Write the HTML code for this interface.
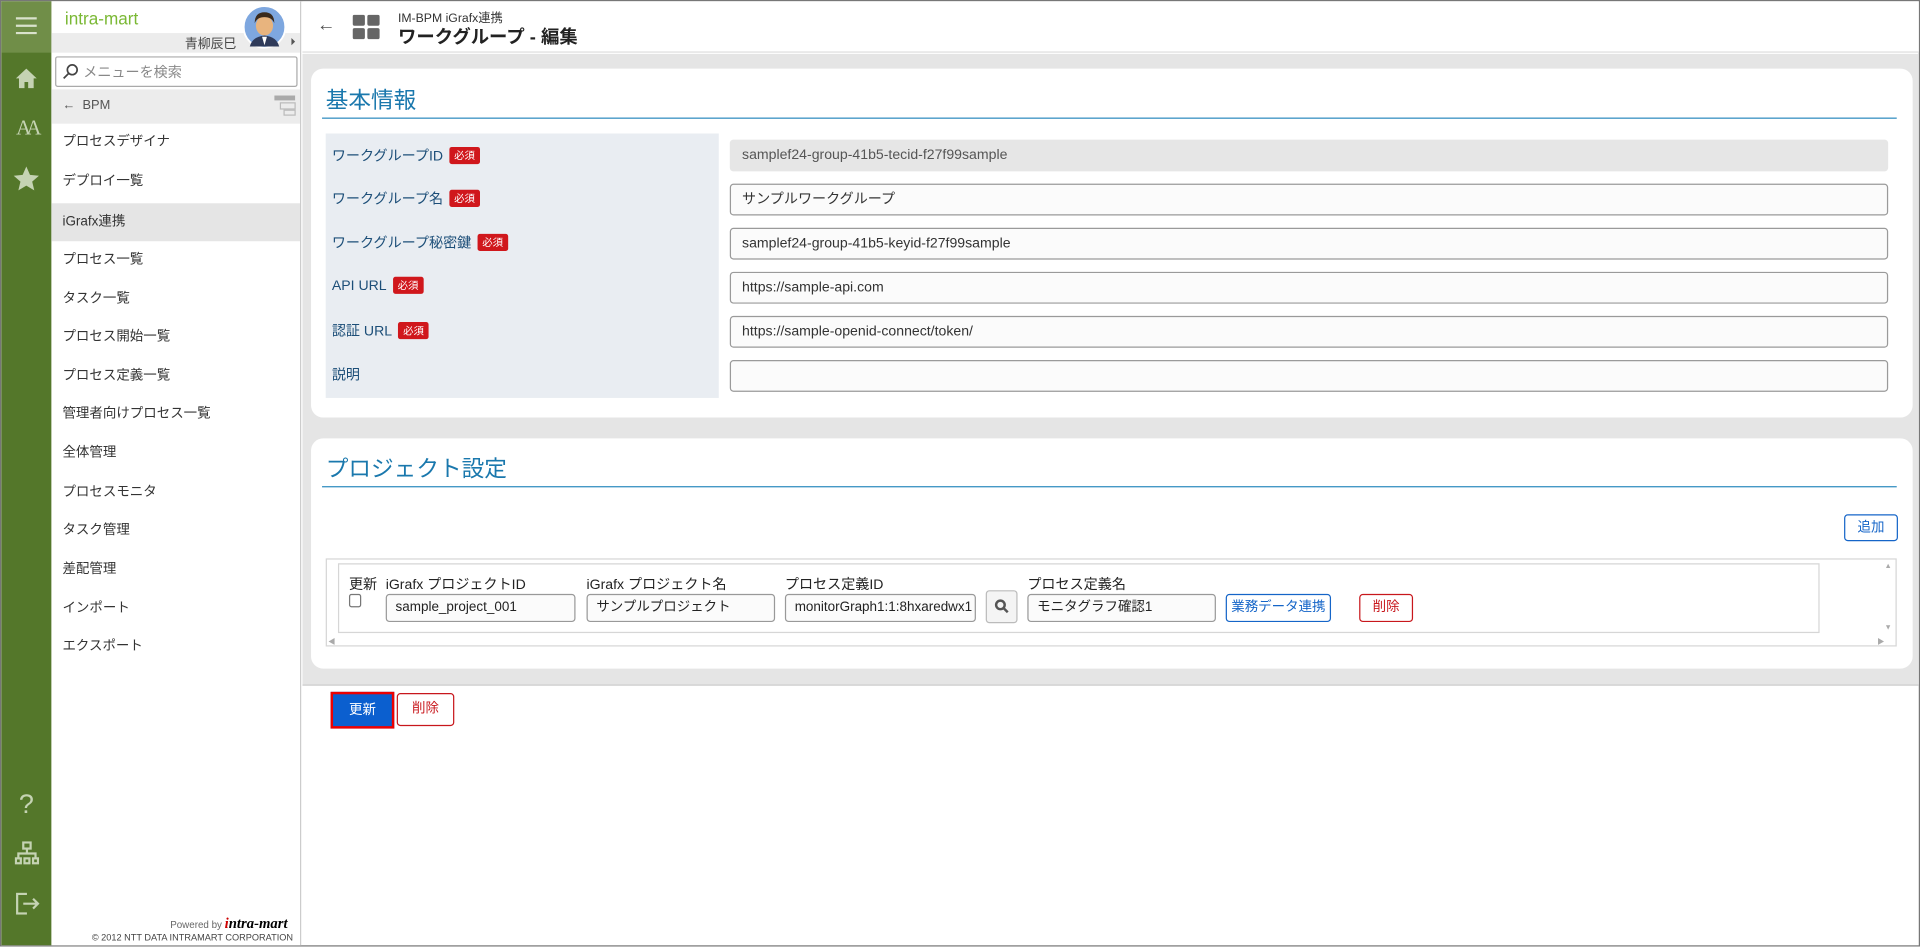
<!DOCTYPE html>
<html><head><meta charset="utf-8">
<style>
*{box-sizing:border-box;margin:0;padding:0}
html,body{width:1920px;height:946px;overflow:hidden;background:#fff}
body{font-family:"Liberation Sans","Noto Sans CJK JP",sans-serif;}
#w{position:absolute;left:0;top:0;width:1568px;height:773px;transform:scale(1.22449);transform-origin:0 0;border:1px solid #777;overflow:hidden}
.a{position:absolute}
.gb{left:0;top:0;width:41px;height:773px;background:#54772a}
.gt{left:0;top:0;width:41px;height:42px;background:#708e48}
.ic{color:#c5d3b3;position:absolute;left:0;width:41px;text-align:center}
.sb{left:41px;top:0;width:204px;height:773px;background:#fff;border-right:1px solid #ccc}
.mi{position:absolute;left:0;width:203px;height:31.6px;line-height:31.6px;padding-left:9px;font-size:11px;color:#333}
.card{position:absolute;background:#fff;border-radius:10px}
.ttl{position:absolute;font-size:18.5px;color:#1a78ad}
.ul{position:absolute;height:1px;background:#2d8bbf}
.lb{position:absolute;left:270px;font-size:11.5px;color:#1c4e78}
.rq{display:inline-block;background:#d0171c;color:#fff;font-size:8.5px;padding:1px 4px;border-radius:2px;margin-left:5px;vertical-align:1px}
.in{position:absolute;left:595px;width:946px;height:26px;border:1px solid #9a9a9a;border-radius:3px;background:#fbfbfb;font-size:11.5px;color:#333;padding-left:9px;line-height:24px}
.ti{position:absolute;top:484px;height:23px;border:1px solid #999;border-radius:3px;background:#fbfbfb;font-size:11px;color:#222;padding-left:7px;line-height:21px;white-space:nowrap;overflow:hidden}
.th{position:absolute;top:468px;font-size:11.5px;color:#222}
.btn{position:absolute;border-radius:3px;font-size:11px;text-align:center;background:#fff}
</style></head><body><div id="w">
<div class="a gb"></div><div class="a gt"></div>
<svg class="a" style="left:11px;top:12px" width="19" height="16"><path d="M1 2h17M1 8h17M1 14h17" stroke="#d9e2cc" stroke-width="1.8"/></svg>
<svg class="a" style="left:11px;top:54px" width="19" height="18"><path d="M9.5 1L1 9h2.5v8h4.5v-5h3v5h4.5v-8H18z" fill="#c5d3b3"/></svg>
<div class="ic" style="top:94px;font-family:'Liberation Serif',serif;font-size:17px;letter-spacing:-4px">AA</div>
<svg class="a" style="left:10px;top:135px" width="21" height="20"><path d="M10.5 0l3 6.8 7.3.7-5.5 4.8 1.7 7.2-6.5-3.9-6.5 3.9 1.7-7.2L.2 7.5l7.3-.7z" fill="#c5d3b3"/></svg>
<div class="ic" style="top:643px;font-size:22px">?</div>
<svg class="a" style="left:11px;top:686px" width="20" height="20" fill="none" stroke="#c5d3b3" stroke-width="1.8"><rect x="7" y="1" width="6" height="5"/><path d="M10 6v4M3 14v-4h14v4"/><rect x="1" y="14" width="4" height="4"/><rect x="8" y="14" width="4" height="4"/><rect x="15" y="14" width="4" height="4"/></svg>
<svg class="a" style="left:12px;top:728px" width="20" height="18" fill="none" stroke="#c5d3b3" stroke-width="1.8"><path d="M9 1H1v16h8M6 9h12M14 5l4 4-4 4"/></svg>

<div class="a sb">
 <div class="a" style="left:11px;top:6px;font-size:14px;color:#7ab834">intra-mart</div>
 <div class="a" style="left:0;top:26px;width:203px;height:16px;background:#ececec"></div>
 <div class="a" style="left:109px;top:27px;font-size:10.5px;color:#444">青柳辰巳</div>
 <div class="a" style="left:196px;top:30px;width:0;height:0;border-left:3px solid #555;border-top:3px solid transparent;border-bottom:3px solid transparent"></div>
 <svg class="a" style="left:156px;top:3px" width="36" height="36"><circle cx="18" cy="18" r="17" fill="#7ea7df" stroke="#fff" stroke-width="1.5"/><path d="M6 34q2-8 12-9 10 1 12 9z" fill="#2f3b5a"/><path d="M16 26l2 7 2-7z" fill="#fff"/><ellipse cx="18" cy="17" rx="7" ry="8" fill="#e8b47e"/><path d="M10 15q0-9 8-9 8 0 8 9-2-5-8-5-6 0-8 5z" fill="#3a2a1c"/></svg>
 <div class="a" style="left:3px;top:45px;width:198px;height:25px;border:1px solid #aaa;border-radius:2px"></div>
 <svg class="a" style="left:9px;top:51px" width="13" height="13" fill="none" stroke="#444" stroke-width="1.4"><circle cx="8" cy="5" r="4"/><path d="M5 8l-4 4"/></svg>
 <div class="a" style="left:26px;top:50px;font-size:11.5px;color:#888">メニューを検索</div>
 <div class="a" style="left:0;top:72px;width:203px;height:28px;background:#ececec"></div>
 <div class="a" style="left:9px;top:79px;font-size:10.5px;color:#555">←&nbsp; BPM</div>
 <svg class="a" style="left:182px;top:77px" width="18" height="18"><rect x="0" y="0" width="17" height="4" fill="#aaa"/><rect x="5" y="6" width="12" height="5" fill="none" stroke="#bbb"/><rect x="8" y="12" width="9" height="4" fill="none" stroke="#bbb"/></svg>
 <div class="mi" style="top:100px">プロセスデザイナ</div>
 <div class="mi" style="top:132px">デプロイ一覧</div>
 <div class="mi" style="top:164.5px;background:#e5e5e5">iGrafx連携</div>
 <div class="mi" style="top:196px">プロセス一覧</div>
 <div class="mi" style="top:227.5px">タスク一覧</div>
 <div class="mi" style="top:259px">プロセス開始一覧</div>
 <div class="mi" style="top:290.5px">プロセス定義一覧</div>
 <div class="mi" style="top:322px">管理者向けプロセス一覧</div>
 <div class="mi" style="top:354px">全体管理</div>
 <div class="mi" style="top:385.5px">プロセスモニタ</div>
 <div class="mi" style="top:417px">タスク管理</div>
 <div class="mi" style="top:449px">差配管理</div>
 <div class="mi" style="top:480.5px">インポート</div>
 <div class="mi" style="top:512px">エクスポート</div>
 <div class="a" style="left:97px;top:746px;font-size:8px;color:#666">Powered by <span style="font-family:'Liberation Serif',serif;font-size:12px;font-weight:bold;font-style:italic;color:#000"><span style="color:#c00">i</span>ntra-mart</span></div>
 <div class="a" style="left:33px;top:760px;font-size:7.5px;color:#444">© 2012 NTT DATA INTRAMART CORPORATION</div>
</div>

<div class="a" style="left:246px;top:0;width:1322px;height:42px;background:#fff;border-bottom:1px solid #ddd"></div>
<div class="a" style="left:258px;top:11px;font-size:15px;color:#555">←</div>
<svg class="a" style="left:287px;top:11px" width="24" height="22" fill="#666"><rect x="0" y="0" width="10" height="9" rx="1.5"/><rect x="12" y="0" width="10" height="9" rx="1.5"/><rect x="0" y="11" width="10" height="9" rx="1.5"/><rect x="12" y="11" width="10" height="9" rx="1.5"/></svg>
<div class="a" style="left:324px;top:5px;font-size:10px;color:#333">IM-BPM iGrafx連携</div>
<div class="a" style="left:324px;top:18px;font-size:15px;font-weight:bold;color:#222">ワークグループ - 編集</div>

<div class="a" style="left:246px;top:43px;width:1322px;height:515px;background:#e5e5e5"></div>
<div class="card" style="left:253px;top:55px;width:1308px;height:285px"></div>
<div class="ttl" style="left:265px;top:67px">基本情報</div>
<div class="ul" style="left:262px;top:95px;width:1286px"></div>
<div class="a" style="left:265px;top:108px;width:321px;height:216px;background:#e9edf2"></div>
<div class="lb" style="top:118px">ワークグループID<span class="rq">必須</span></div>
<div class="lb" style="top:153px">ワークグループ名<span class="rq">必須</span></div>
<div class="lb" style="top:189px">ワークグループ秘密鍵<span class="rq">必須</span></div>
<div class="lb" style="top:225px">API URL<span class="rq">必須</span></div>
<div class="lb" style="top:261px">認証 URL<span class="rq">必須</span></div>
<div class="lb" style="top:297px">説明</div>
<div class="in" style="top:113px;background:#e6e6e6;border-color:#e6e6e6;color:#555">samplef24-group-41b5-tecid-f27f99sample</div>
<div class="in" style="top:149px">サンプルワークグループ</div>
<div class="in" style="top:185px">samplef24-group-41b5-keyid-f27f99sample</div>
<div class="in" style="top:221px">https://sample-api.com</div>
<div class="in" style="top:257px">https://sample-openid-connect/token/</div>
<div class="in" style="top:293px"></div>

<div class="card" style="left:253px;top:357px;width:1308px;height:188px"></div>
<div class="ttl" style="left:265px;top:368px">プロジェクト設定</div>
<div class="ul" style="left:262px;top:396px;width:1286px"></div>
<div class="btn" style="left:1505px;top:419px;width:44px;height:22px;border:1px solid #1565c8;color:#1565c8;line-height:20px">追加</div>
<div class="a" style="left:265px;top:455px;width:1283px;height:72px;border:1px solid #d6d6d6"></div>
<div class="a" style="left:275px;top:459px;width:1210px;height:57px;border:1px solid #d6d6d6"></div>
<div class="a" style="left:1538px;top:459px;font-size:6px;color:#aaa">▲</div>
<div class="a" style="left:1538px;top:509px;font-size:6px;color:#aaa">▼</div>
<div class="a" style="left:267px;top:518px;font-size:6px;color:#aaa">◀</div>
<div class="a" style="left:1532px;top:518px;font-size:6px;color:#aaa">▶</div>
<div class="th" style="left:284px">更新</div>
<div class="a" style="left:284px;top:484px;width:10px;height:11px;border:1px solid #777;border-radius:2px;background:#fff"></div>
<div class="th" style="left:314px">iGrafx プロジェクトID</div>
<div class="th" style="left:478px">iGrafx プロジェクト名</div>
<div class="th" style="left:640px">プロセス定義ID</div>
<div class="th" style="left:838px">プロセス定義名</div>
<div class="ti" style="left:314px;width:155px">sample_project_001</div>
<div class="ti" style="left:478px;width:154px">サンプルプロジェクト</div>
<div class="ti" style="left:640px;width:156px">monitorGraph1:1:8hxaredwx1</div>
<div class="a" style="left:804px;top:481px;width:26px;height:27px;border:1px solid #bbb;border-radius:3px;background:#f4f4f4"></div>
<svg class="a" style="left:811px;top:488px" width="12" height="12" fill="none" stroke="#555" stroke-width="2"><circle cx="5" cy="5" r="3.5"/><path d="M7.5 7.5l3.5 3.5"/></svg>
<div class="ti" style="left:838px;width:154px">モニタグラフ確認1</div>
<div class="btn" style="left:1000px;top:484px;width:86px;height:23px;border:1px solid #1565c8;color:#1565c8;line-height:21px">業務データ連携</div>
<div class="btn" style="left:1109px;top:484px;width:44px;height:23px;border:1px solid #c8171c;color:#c8171c;line-height:21px">削除</div>

<div class="a" style="left:246px;top:558px;width:1322px;height:1px;background:#ccc"></div>
<div class="btn" style="left:269px;top:564px;width:52px;height:30px;border:2px solid #e00;background:#0b5fcf;color:#fff;line-height:26px;border-radius:0">更新</div>
<div class="btn" style="left:323px;top:565px;width:47px;height:27px;border:1px solid #c8171c;color:#c8171c;line-height:25px">削除</div>
</div></body></html>
